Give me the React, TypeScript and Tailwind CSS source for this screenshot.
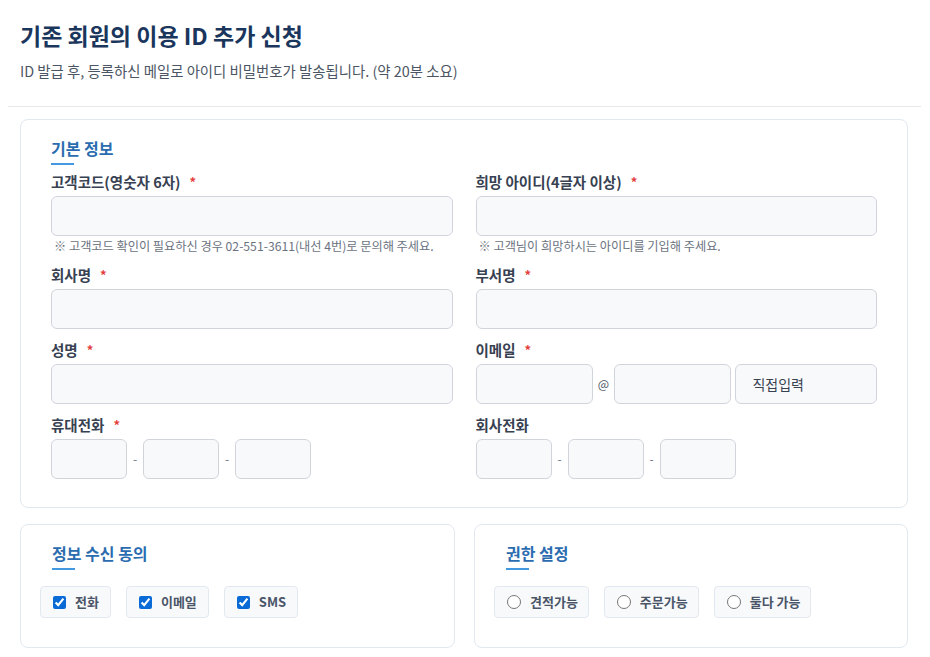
import { ReactNode } from 'react';

function SectionTitle({ children, inset }: { children: ReactNode; inset?: boolean }) {
  return (
    <div className={inset ? 'pl-3' : ''}>
      <h2 className="text-[16px] leading-[24px] font-bold text-[#2b6cb0]">{children}</h2>
      <div className="mt-[3px] h-[2px] w-[23px] bg-[#4299e1]" />
    </div>
  );
}

function Label({ children, required }: { children: ReactNode; required?: boolean }) {
  return (
    <label className="mb-1 flex h-5 items-center text-[14.5px] font-bold text-[#374151]">
      {children}
      {required && <span className="ml-[9px] text-[13px] text-[#e53e3e]">*</span>}
    </label>
  );
}

const inputCls =
  'h-10 rounded-md border border-[#d1d5db] bg-[#f8f9fb] px-3 text-[14px] text-[#374151] outline-none';

function Field({
  label,
  required,
  hint,
}: {
  label: string;
  required?: boolean;
  hint?: string;
}) {
  return (
    <div className="flex flex-col">
      <Label required={required}>{label}</Label>
      <input className={`${inputCls} w-full`} />
      {hint && (
        <p className="mt-[2px] pl-[3px] text-[12.2px] leading-4 text-[#6b7280]">{hint}</p>
      )}
    </div>
  );
}

function PhoneField({ label, required }: { label: string; required?: boolean }) {
  return (
    <div className="flex flex-col">
      <Label required={required}>{label}</Label>
      <div className="flex items-center">
        <input className={`${inputCls} w-[76px]`} />
        <span className="w-4 text-center text-[12px] text-[#6b7280]">-</span>
        <input className={`${inputCls} w-[76px]`} />
        <span className="w-4 text-center text-[12px] text-[#6b7280]">-</span>
        <input className={`${inputCls} w-[76px]`} />
      </div>
    </div>
  );
}

export default function App() {
  return (
    <div className="min-h-screen bg-white font-['Noto_Sans_CJK_KR',sans-serif] text-[#374151]">
      <div className="px-2">
        {/* Header */}
        <div className="px-3 pt-[19px]">
          <h1 className="text-[23px] leading-[32px] font-bold text-[#1a365d]">
            기존 회원의 이용 ID 추가 신청
          </h1>
          <p className="mt-[10px] text-[14.4px] leading-[20px] text-[#4b5563]">
            ID 발급 후, 등록하신 메일로 아이디 비밀번호가 발송됩니다. (약 20분 소요)
          </p>
        </div>
        <div className="mt-[25px] h-px w-[913px] bg-[#e5e7eb]" />

        {/* Basic info */}
        <div className="mt-3 ml-3 w-[888px] rounded-lg border border-[#e2e8f0] bg-white px-[30px] pt-4 pb-[28px]">
          <SectionTitle>기본 정보</SectionTitle>
          <div className="mt-[7px] grid grid-cols-2 gap-x-[23px] gap-y-[11px]">
            <Field
              label="고객코드(영숫자 6자)"
              required
              hint="※ 고객코드 확인이 필요하신 경우 02-551-3611(내선 4번)로 문의해 주세요."
            />
            <Field
              label="희망 아이디(4글자 이상)"
              required
              hint="※ 고객님이 희망하시는 아이디를 기입해 주세요."
            />
            <Field label="회사명" required />
            <Field label="부서명" required />
            <Field label="성명" required />
            <div className="flex flex-col">
              <Label required>이메일</Label>
              <div className="flex items-center">
                <input className={`${inputCls} w-[117px]`} />
                <span className="w-[22px] text-center text-[12px] text-[#4b5563]">@</span>
                <input className={`${inputCls} w-[117px]`} />
                <select
                  defaultValue="direct"
                  className={`${inputCls} ml-1 w-[142px] appearance-none pl-4`}
                >
                  <option value="direct">직접입력</option>
                  <option value="naver">naver.com</option>
                  <option value="gmail">gmail.com</option>
                </select>
              </div>
            </div>
            <PhoneField label="휴대전화" required />
            <PhoneField label="회사전화" />
          </div>
        </div>

        {/* Bottom cards */}
        <div className="mt-4 ml-3 grid w-[888px] grid-cols-[435px_434px] gap-[19px]">
          <div className="rounded-lg border border-[#e2e8f0] bg-white px-[19px] pt-4 pb-[29px]">
            <SectionTitle inset>정보 수신 동의</SectionTitle>
            <div className="mt-4 flex gap-[15px]">
              {['전화', '이메일', 'SMS'].map((t) => (
                <label
                  key={t}
                  className="flex h-8 items-center gap-[9px] rounded border border-[#e2e8f0] bg-[#f8f9fb] pr-[11px] pl-3 text-[13px] font-bold text-[#4a5568]"
                >
                  <input type="checkbox" defaultChecked className="h-[13px] w-[13px] accent-[#0b6bd6]" />
                  {t}
                </label>
              ))}
            </div>
          </div>
          <div className="rounded-lg border border-[#e2e8f0] bg-white px-[19px] pt-4 pb-[29px]">
            <SectionTitle inset>권한 설정</SectionTitle>
            <div className="mt-4 flex gap-[15px]">
              {['견적가능', '주문가능', '둘다 가능'].map((t) => (
                <label
                  key={t}
                  className="flex h-8 items-center gap-[9px] rounded border border-[#e2e8f0] bg-[#f8f9fb] pr-[10px] pl-3 text-[13px] font-bold text-[#4a5568]"
                >
                  <input type="radio" name="perm" className="h-[14px] w-[14px]" />
                  {t}
                </label>
              ))}
            </div>
          </div>
        </div>
      </div>
    </div>
  );
}
